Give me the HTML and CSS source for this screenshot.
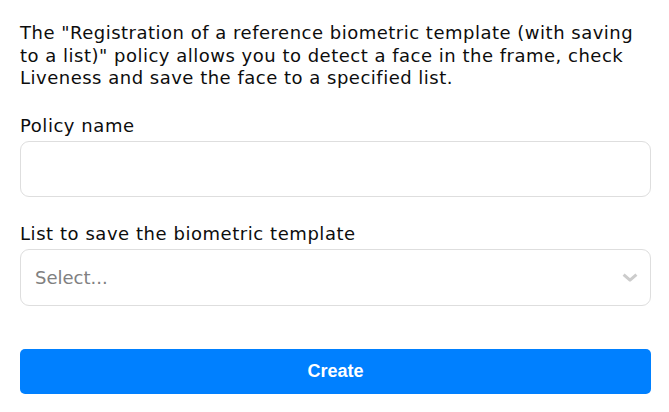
FILE: index.html
```html
<!DOCTYPE html>
<html lang="en">
<head>
<meta charset="utf-8">
<title>Create policy</title>
<link rel="stylesheet" href="styles.css">
</head>
<body>
<form class="policy-form">
  <p class="intro">The "Registration of a reference biometric template (with saving to a list)" policy allows you to detect a face in the frame, check Liveness and save the face to a specified list.</p>
  <div class="field">
    <label class="field-label" for="policy-name">Policy name</label>
    <input class="text-input" id="policy-name" type="text">
  </div>
  <div class="field field-list">
    <label class="field-label">List to save the biometric template</label>
    <div class="select">
      <span class="select-placeholder">Select...</span>
      <span class="select-indicator">
        <svg viewBox="0 0 16 9" width="16" height="9" aria-hidden="true"><polyline points="1.6,1.6 8,7.2 14.4,1.6"/></svg>
      </span>
    </div>
  </div>
  <button class="create-btn" type="button">Create</button>
</form>
</body>
</html>
```

FILE: styles.css
```css
html, body {
  margin: 0;
  padding: 0;
  background: #fff;
}

body {
  font-family: "DejaVu Sans", Verdana, sans-serif;
  color: #0d0d0d;
}

.policy-form {
  width: 631px;
  padding: 22px 18px 0 20px;
  display: flex;
  flex-direction: column;
}

.intro {
  margin: 0;
  font-size: 18px;
  line-height: 22.5px;
  letter-spacing: 0.5px;
}

.field {
  display: flex;
  flex-direction: column;
  margin-top: 25px;
}

.field-list {
  margin-top: 26px;
}

.field-label {
  font-size: 18px;
  line-height: 22.5px;
  letter-spacing: 0.55px;
  margin-bottom: 4px;
}

.field-list .field-label {
  margin-bottom: 3px;
}

.text-input {
  box-sizing: border-box;
  width: 100%;
  height: 56px;
  border: 1px solid #dedede;
  border-radius: 9px;
  margin: 0;
  padding: 0 15px;
  font: inherit;
  font-size: 18px;
  outline: none;
}

.select {
  box-sizing: border-box;
  height: 57px;
  border: 1px solid #dedede;
  border-radius: 9px;
  display: flex;
  align-items: center;
  justify-content: space-between;
  padding: 0 12px 0 14px;
}

.select-placeholder {
  color: #808080;
  font-size: 18px;
  letter-spacing: 0;
}

.select-indicator {
  display: flex;
}

.select-indicator svg {
  width: 16px;
  height: 9px;
  fill: none;
  stroke: #cccccc;
  stroke-width: 3;
  stroke-linejoin: round;
}

.create-btn {
  margin-top: 43px;
  height: 45px;
  border: none;
  border-radius: 5px;
  background: #0080ff;
  color: #fff;
  font-family: "Liberation Sans", Arial, sans-serif;
  font-weight: bold;
  font-size: 18px;
  cursor: pointer;
}
```
